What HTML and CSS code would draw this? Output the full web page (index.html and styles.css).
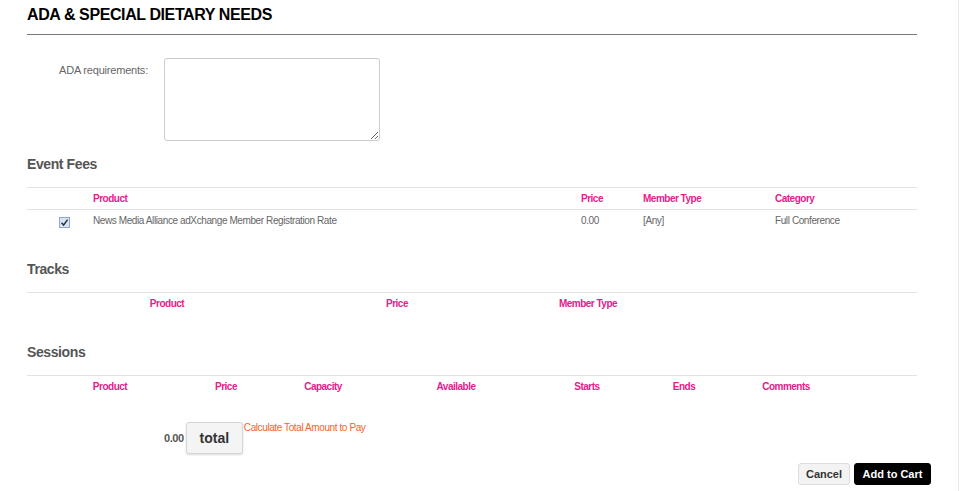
FILE: index.html
```html
<!DOCTYPE html>
<html>
<head>
  <meta charset="utf-8">
  <title>Event Registration</title>
  <link rel="stylesheet" href="styles.css">
</head>
<body>
  <div class="page">
    <div class="main">
      <h2 class="title">ADA &amp; SPECIAL DIETARY NEEDS</h2>

      <div class="field">
        <label class="field-label" for="ada">ADA requirements:</label>
        <textarea class="field-input" id="ada" name="ada"></textarea>
      </div>

      <!-- event fees -->
      <h3 class="section first">Event Fees</h3>
      <div class="grid fees">
        <div class="row head">
          <div></div>
          <div>Product</div>
          <div>Price</div>
          <div>Member Type</div>
          <div>Category</div>
        </div>
        <div class="row body">
          <div class="check-cell"><span class="check"><svg width="9" height="9" viewBox="0 0 9 9"><path d="M1.5 4.8 L3.6 7 L7.6 1.6" fill="none" stroke="#333" stroke-width="1.5"/></svg></span></div>
          <div>News Media Alliance adXchange Member Registration Rate</div>
          <div>0.00</div>
          <div>[Any]</div>
          <div>Full Conference</div>
        </div>
      </div>

      <!-- tracks -->
      <h3 class="section tracks-title">Tracks</h3>
      <div class="grid tracks">
        <div class="row head">
          <div>Product</div>
          <div>Price</div>
          <div>Member Type</div>
          <div></div>
        </div>
      </div>

      <!-- sessions -->
      <h3 class="section sessions-title">Sessions</h3>
      <div class="grid sessions">
        <div class="row head">
          <div>Product</div>
          <div>Price</div>
          <div>Capacity</div>
          <div>Available</div>
          <div>Starts</div>
          <div>Ends</div>
          <div>Comments</div>
          <div></div>
        </div>
      </div>

      <div class="total-row">
        <span class="total-amount">0.00</span>
        <button class="btn-total" type="button">total</button>
        <a class="calc-link" href="#">Calculate Total Amount to Pay</a>
      </div>

      <div class="actions">
        <button class="btn btn-cancel" type="button">Cancel</button>
        <button class="btn btn-cart" type="button">Add to Cart</button>
      </div>
    </div>
  </div>
</body>
</html>
```

FILE: styles.css
```css
html, body {
  margin: 0;
  padding: 0;
  background: #fff;
}
body {
  font-family: "Liberation Sans", Arial, sans-serif;
  color: #666;
}
.page {
  width: 959px;
  min-height: 491px;
  box-sizing: border-box;
  border-right: 1px solid #ececec;
}
.main {
  margin: 0 41px 0 27px;
}

.title {
  margin: 0;
  padding: 5px 0 9px;
  font-size: 16px;
  line-height: 20px;
  font-weight: bold;
  letter-spacing: -0.4px;
  color: #000;
  border-bottom: 1px solid #777;
}

.field {
  display: flex;
  margin-top: 23px;
}
.field-label {
  width: 121px;
  padding-top: 4px;
  margin-right: 16px;
  text-align: right;
  font-size: 11px;
  line-height: 16px;
  letter-spacing: -0.2px;
  color: #666;
}
.field-input {
  width: 216px;
  height: 83px;
  box-sizing: border-box;
  margin: 0;
  border: 1px solid #ccc;
  border-radius: 3px;
  font-family: inherit;
}

.section {
  margin: 0;
  font-size: 14px;
  line-height: 18px;
  font-weight: bold;
  letter-spacing: -0.4px;
  color: #555;
}
.section.first { margin-top: 14px; }
.tracks-title { margin-top: 28px; }
.sessions-title { margin-top: 29px; }

.grid {
  margin-top: 14px;
  border-top: 1px solid #e2e2e2;
  font-size: 10px;
  line-height: 13px;
}
.row {
  display: grid;
}
.row > div {
  padding: 4px 0 4px;
}
.head {
  font-weight: bold;
  letter-spacing: -0.5px;
  color: #e4208b;
}
.fees .head {
  border-bottom: 1px solid #e2e2e2;
}
.fees .row {
  grid-template-columns: 66px 488px 62px 132px 1fr;
}
.fees .body > div {
  padding: 4px 0 5px;
  letter-spacing: -0.4px;
  color: #666;
}
.fees .body > .check-cell {
  padding: 5px 0 4px;
}
.check {
  display: flex;
  align-items: center;
  justify-content: center;
  width: 9px;
  height: 9px;
  margin: 2px 0 0 32px;
  border: 1px solid #8aa7d8;
  background: #d9e5f7;
}

.tracks .row {
  grid-template-columns: 280px 180px 202px 1fr;
  text-align: center;
}
.sessions .row {
  grid-template-columns: 166px 66px 128px 138px 124px 70px 134px 1fr;
  text-align: center;
}

.total-row {
  display: flex;
  align-items: center;
  margin-top: 25px;
  padding-left: 137px;
}
.total-amount {
  font-size: 11px;
  font-weight: bold;
  letter-spacing: -0.4px;
  color: #555;
  margin-right: 2px;
}
.btn-total {
  width: 57px;
  height: 32px;
  margin: 0;
  padding: 0;
  border: 1px solid #d6d6d6;
  border-radius: 3px;
  background: #f4f4f4;
  box-shadow: 0 1px 2px rgba(0,0,0,0.15);
  font-family: inherit;
  font-size: 14px;
  font-weight: bold;
  color: #333;
}
.calc-link {
  align-self: flex-start;
  margin-left: 1px;
  font-size: 10px;
  line-height: 12px;
  letter-spacing: -0.4px;
  color: #f7631f;
  text-decoration: none;
}

.actions {
  display: flex;
  justify-content: flex-end;
  gap: 4px;
  margin: 9px -14px 0 0;
}
.btn {
  height: 22px;
  margin: 0;
  padding: 0;
  border-radius: 3px;
  font-family: inherit;
  font-size: 11px;
  font-weight: bold;
}
.btn-cancel {
  width: 52px;
  border: 1px solid #ddd;
  background: #f3f3f3;
  color: #333;
}
.btn-cart {
  width: 77px;
  border: 1px solid #000;
  background: #000;
  color: #fff;
}
```
